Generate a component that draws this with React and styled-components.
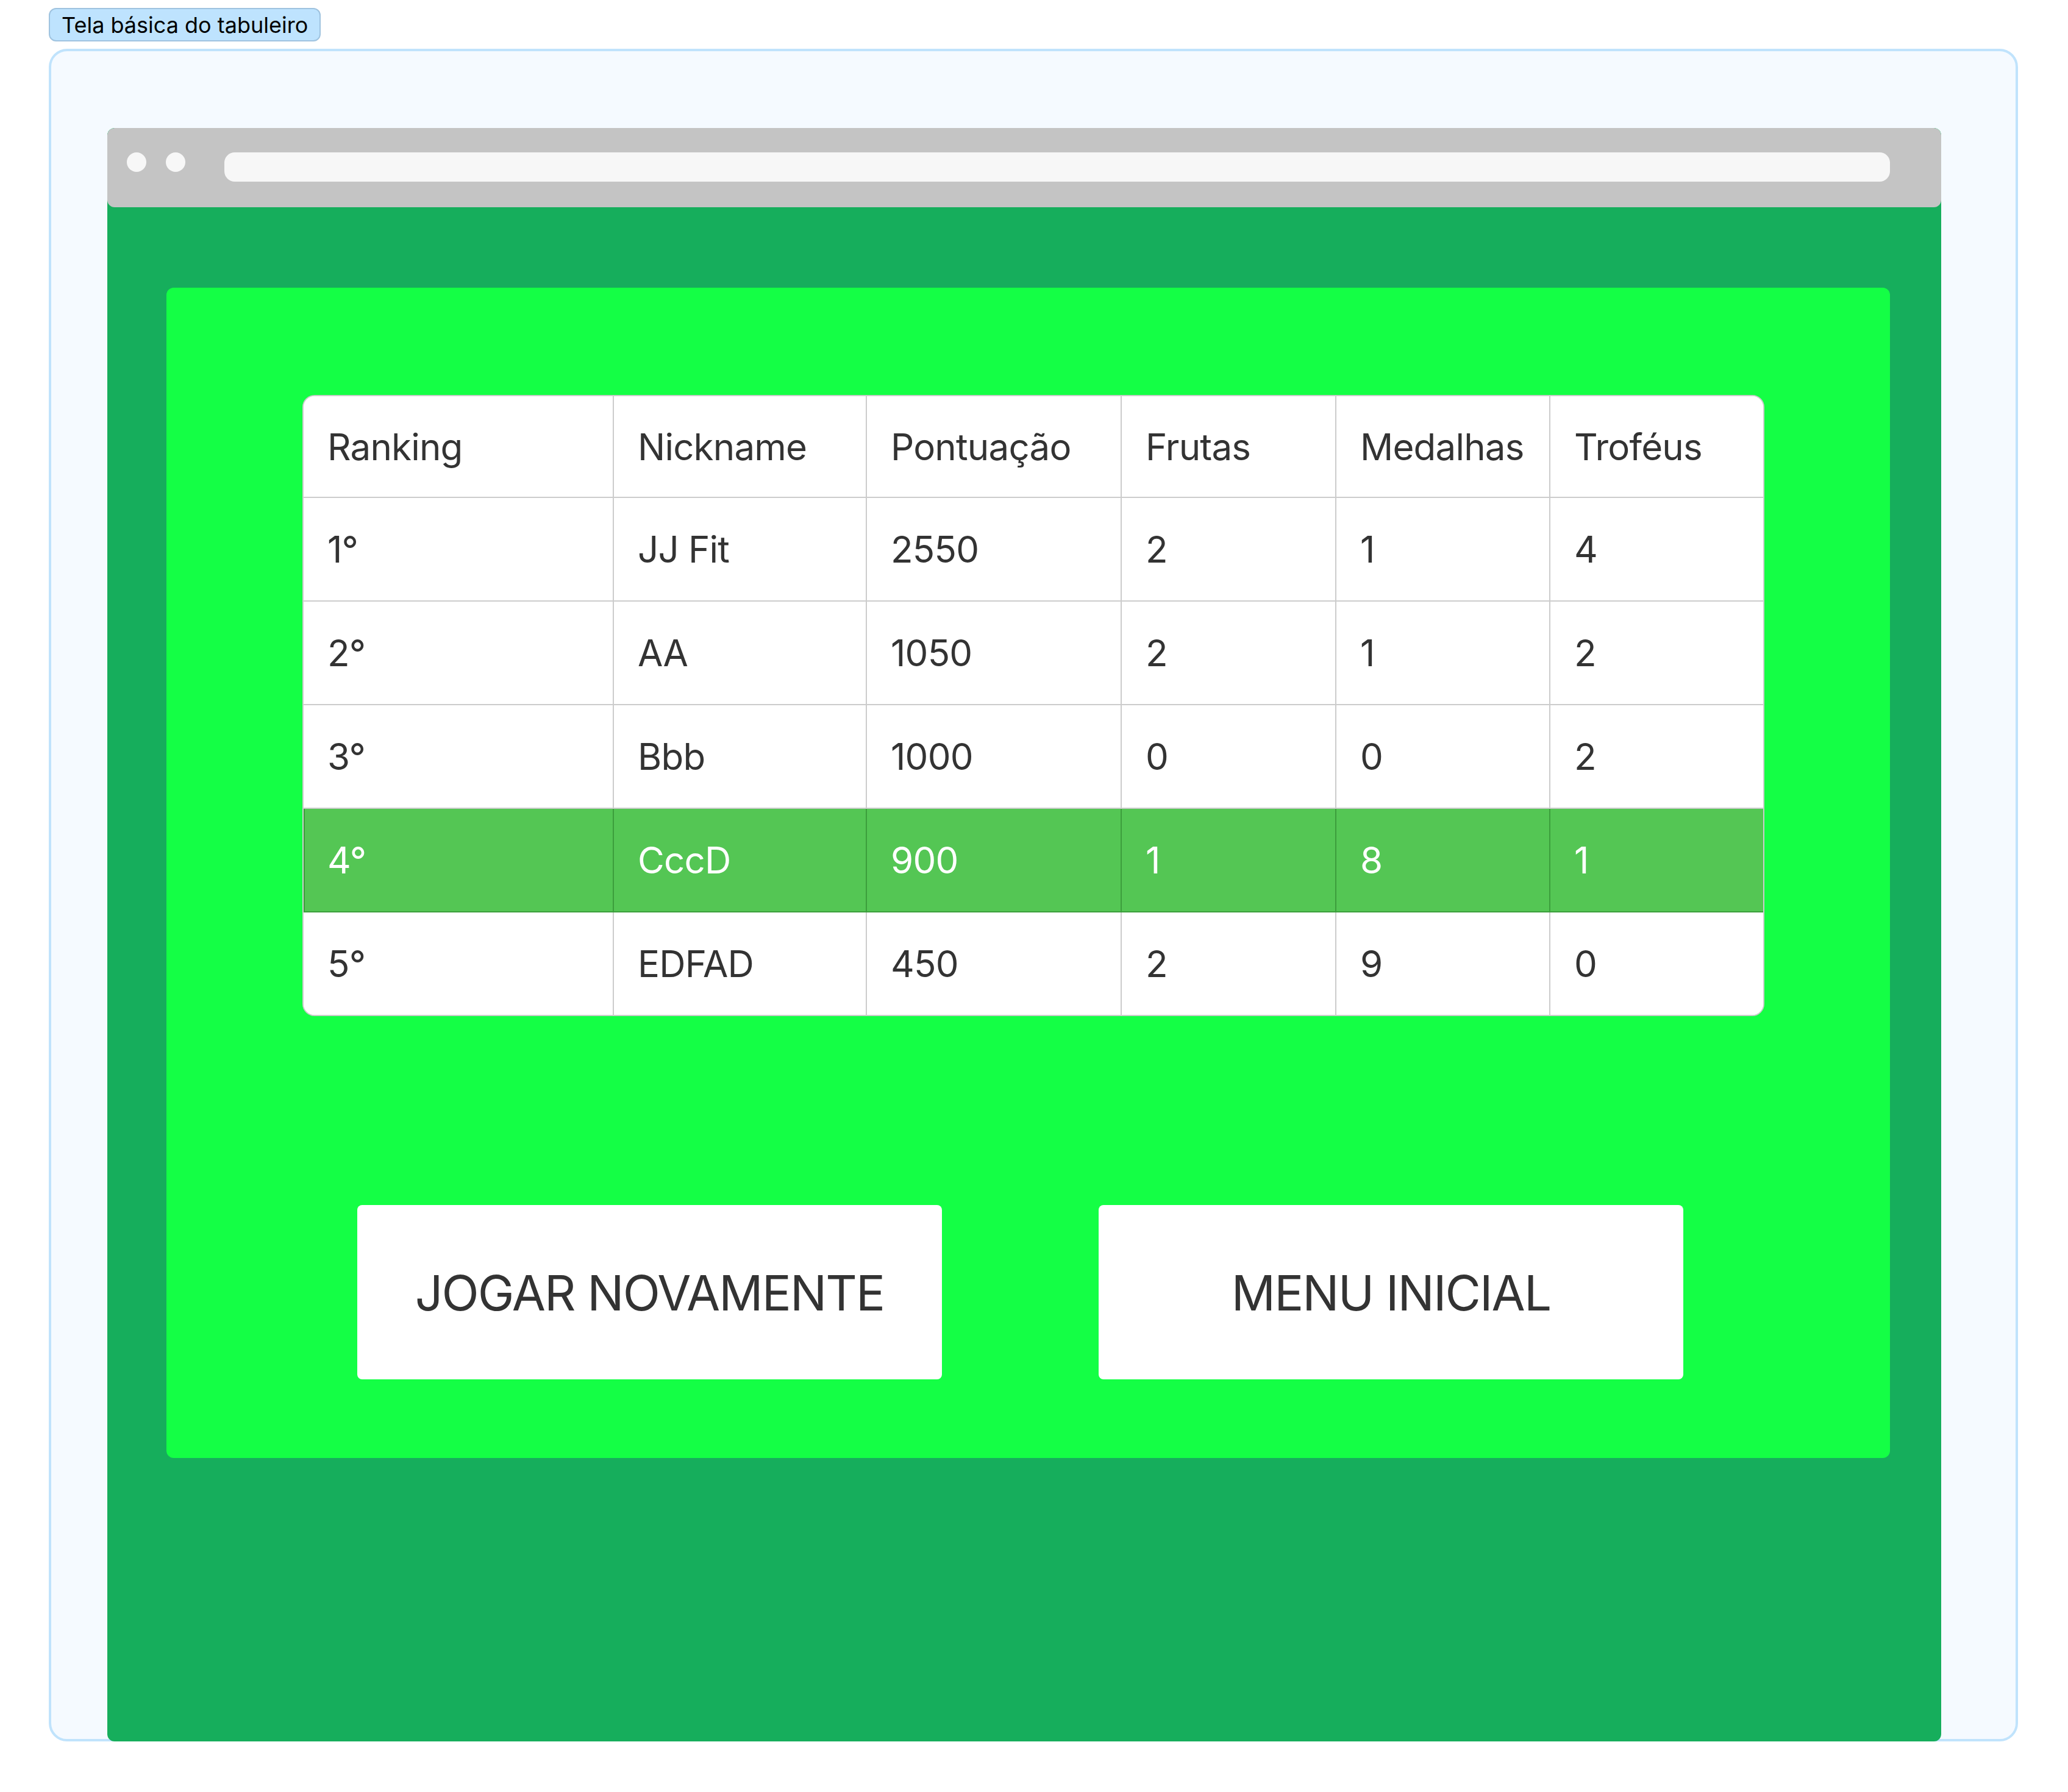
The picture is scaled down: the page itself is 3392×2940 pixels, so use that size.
import React from "react";
import styled, { createGlobalStyle } from "styled-components";

const GlobalStyle = createGlobalStyle`
  body {
    margin: 0;
    background: #ffffff;
    font-family: Inter, "Noto Sans", sans-serif;
  }
`;

const columns = ["Ranking", "Nickname", "Pontuação", "Frutas", "Medalhas", "Troféus"];

const players = [
  { pos: "1°", nick: "JJ Fit", score: 2550, fruits: 2, medals: 1, trophies: 4 },
  { pos: "2°", nick: "AA", score: 1050, fruits: 2, medals: 1, trophies: 2 },
  { pos: "3°", nick: "Bbb", score: 1000, fruits: 0, medals: 0, trophies: 2 },
  { pos: "4°", nick: "CccD", score: 900, fruits: 1, medals: 8, trophies: 1, current: true },
  { pos: "5°", nick: "EDFAD", score: 450, fruits: 2, medals: 9, trophies: 0 },
];

const App = () => {
  return (
    <>
      <GlobalStyle />
      <Page>
        <Label>Tela básica do tabuleiro</Label>
        <Frame>
          <BrowserWindow>
            <TitleBar>
              <Dot />
              <Dot />
              <AddressBar />
            </TitleBar>
            <Screen>
              <Board>
                <Ranking>
                  <Row $header>
                    {columns.map((c) => (
                      <Cell key={c}>{c}</Cell>
                    ))}
                  </Row>
                  {players.map((p, i) => (
                    <Row key={p.pos} $current={p.current} $last={i === players.length - 1}>
                      <Cell>{p.pos}</Cell>
                      <Cell>{p.nick}</Cell>
                      <Cell>{p.score}</Cell>
                      <Cell>{p.fruits}</Cell>
                      <Cell>{p.medals}</Cell>
                      <Cell>{p.trophies}</Cell>
                    </Row>
                  ))}
                </Ranking>
                <Actions>
                  <ActionButton>JOGAR NOVAMENTE</ActionButton>
                  <ActionButton>MENU INICIAL</ActionButton>
                </Actions>
              </Board>
            </Screen>
          </BrowserWindow>
        </Frame>
      </Page>
    </>
  );
};

export default App;

const Page = styled.div`
  padding: 13px 0 0 80px;
  width: 3230px;
`;

const Label = styled.div`
  display: inline-flex;
  align-items: center;
  box-sizing: border-box;
  height: 55px;
  padding: 0 19px;
  background: #bee3fe;
  border: 2px solid #9fc3df;
  border-radius: 12px;
  font-size: 36px;
  color: #000;
`;

const Frame = styled.div`
  box-sizing: border-box;
  margin-top: 12px;
  width: 3230px;
  height: 2777px;
  padding: 126px 0 0 92px;
  background: #f5faff;
  border: 4px solid #c0e3fc;
  border-radius: 30px;
`;

const BrowserWindow = styled.div`
  display: flex;
  flex-direction: column;
  width: 3008px;
  height: 2647px;
  border-radius: 12px;
  overflow: hidden;
  background: #16ae5c;
`;

const TitleBar = styled.div`
  display: flex;
  align-items: flex-start;
  gap: 32px;
  box-sizing: border-box;
  height: 130px;
  padding: 40px 84px 0 32px;
  background: #c4c4c4;
  border-radius: 12px;
`;

const Dot = styled.span`
  width: 32px;
  height: 32px;
  border-radius: 50%;
  background: #f7f7f7;
`;

const AddressBar = styled.div`
  flex: 1;
  height: 48px;
  margin-left: 32px;
  border-radius: 17px;
  background: #f7f7f7;
`;

const Screen = styled.div`
  flex: 1;
  padding: 132px 0 0 97px;
`;

const Board = styled.div`
  box-sizing: border-box;
  width: 2827px;
  height: 1920px;
  padding: 176px 0 0 223px;
  background: #14ff45;
  border-radius: 12px;
`;

const Ranking = styled.div`
  width: 2398px;
  background: #ffffff;
  border: 2px solid #cccccc;
  border-radius: 20px;
  overflow: hidden;
  box-sizing: border-box;
`;

const Row = styled.div`
  display: grid;
  grid-template-columns: 509px 415px 418px 352px 351px 1fr;
  height: ${(p) => (p.$header ? "167px" : p.$last ? "168px" : "170px")};
  box-sizing: border-box;
  border-bottom: ${(p) => (p.$last ? "0" : "2px")} solid ${(p) => (p.$current ? "#3c9e3c" : "#cccccc")};
  background: ${(p) => (p.$current ? "#54c654" : "#ffffff")};
  color: ${(p) => (p.$current ? "#ffffff" : "#333333")};
  box-shadow: ${(p) => (p.$current ? "inset 2px 0 0 #3c9e3c" : "none")};

  & > div {
    border-right-color: ${(p) => (p.$current ? "#3c9e3c" : "#cccccc")};
  }
`;

const Cell = styled.div`
  display: flex;
  align-items: center;
  padding-left: 39px;
  font-size: 60px;
  letter-spacing: -0.8px;
  border-right: 2px solid #cccccc;

  &:last-child {
    border-right: none;
  }
`;

const Actions = styled.div`
  display: flex;
  gap: 257px;
  margin: 310px 0 0 90px;
`;

const ActionButton = styled.button`
  width: 959px;
  height: 286px;
  border: none;
  border-radius: 8px;
  background: #ffffff;
  color: #333333;
  font-family: Inter, "Noto Sans", sans-serif;
  font-size: 80px;
  letter-spacing: -1.9px;
  cursor: pointer;
`;
